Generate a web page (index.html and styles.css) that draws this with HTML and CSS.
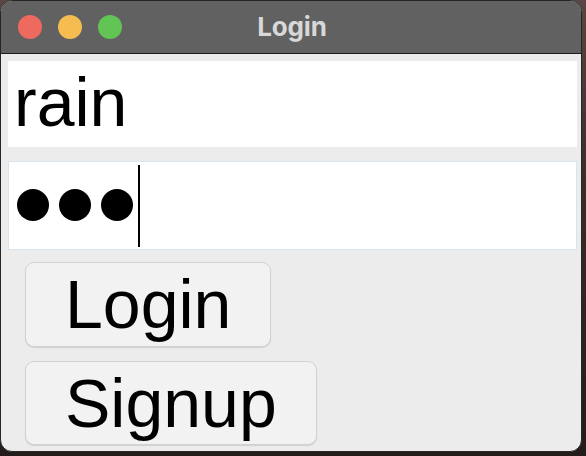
FILE: index.html
```html
<!DOCTYPE html>
<html lang="en">
<head>
<meta charset="utf-8">
<title>Login</title>
<link rel="stylesheet" href="styles.css">
</head>
<body>
<div class="window">
  <div class="titlebar">
    <div class="lights">
      <span class="light red"></span>
      <span class="light yellow"></span>
      <span class="light green"></span>
    </div>
    <div class="title">Login</div>
    <div class="spacer"></div>
  </div>
  <div class="content">
    <div class="field field-text">rain</div>
    <div class="field field-pass">
      <span class="dot"></span><span class="dot"></span><span class="dot"></span><span class="caret"></span>
    </div>
    <div class="buttons">
      <button class="btn btn-login">Login</button>
      <button class="btn btn-signup">Signup</button>
    </div>
  </div>
</div>
</body>
</html>
```
FILE: styles.css
```css
html, body {
  margin: 0;
  padding: 0;
}
body {
  width: 586px;
  height: 456px;
  background: linear-gradient(180deg, #5a4642 0%, #3a2c29 40%, #241c1a 100%);
  overflow: hidden;
}
.window {
  width: 580px;
  height: 450px;
  border: 1px solid #262626;
  border-radius: 12px;
  overflow: hidden;
  background: #ececec;
  display: flex;
  flex-direction: column;
}
.titlebar {
  height: 52px;
  background: #616161;
  border-bottom: 1px solid #1c1c1c;
  display: grid;
  grid-template-columns: 1fr auto 1fr;
  align-items: center;
  flex: none;
}
.lights {
  display: flex;
  gap: 16px;
  padding-left: 17px;
}
.light {
  width: 24px;
  height: 24px;
  border-radius: 50%;
}
.red { background: #ee6a5f; }
.yellow { background: #f5bd4f; }
.green { background: #61c454; }
.title {
  font-family: "Inter", "Noto Sans", sans-serif;
  font-weight: 700;
  font-size: 26px;
  color: #d8d8d8;
  letter-spacing: -0.2px;
  padding-left: 2px;
  margin-top: -2px;
}
.content {
  flex: 1;
  padding: 7px 4px 0 7px;
  display: flex;
  flex-direction: column;
  font-family: "Liberation Sans", Arial, sans-serif;
  color: #000;
}
.field {
  background: #fff;
  box-sizing: border-box;
}
.field-text {
  height: 86px;
  font-size: 68px;
  line-height: 83px;
  padding-left: 6px;
}
.field-pass {
  margin-top: 14px;
  height: 89px;
  border: 1px solid #d6e5ef;
  display: flex;
  align-items: center;
  padding-left: 8px;
  gap: 10px;
}
.dot {
  width: 32px;
  height: 32px;
  border-radius: 50%;
  background: #000;
  margin-top: -1px;
}
.caret {
  width: 2px;
  height: 82px;
  background: #000;
  margin-left: -5px;
}
.buttons {
  margin-top: 12px;
  display: flex;
  flex-direction: column;
  align-items: flex-start;
  gap: 14px;
  padding-left: 17px;
}
.btn {
  font-family: "Liberation Sans", Arial, sans-serif;
  font-size: 68px;
  color: #000;
  background: #f2f2f2;
  border: 1px solid #d2d2d2;
  border-radius: 9px;
  box-shadow: 0 1px 1px rgba(0, 0, 0, 0.12);
  padding: 0 39px 0 39px;
  margin: 0;
}
.btn-login {
  line-height: 83px;
  height: 85px;
}
.btn-signup {
  line-height: 82px;
  height: 84px;
}
```
